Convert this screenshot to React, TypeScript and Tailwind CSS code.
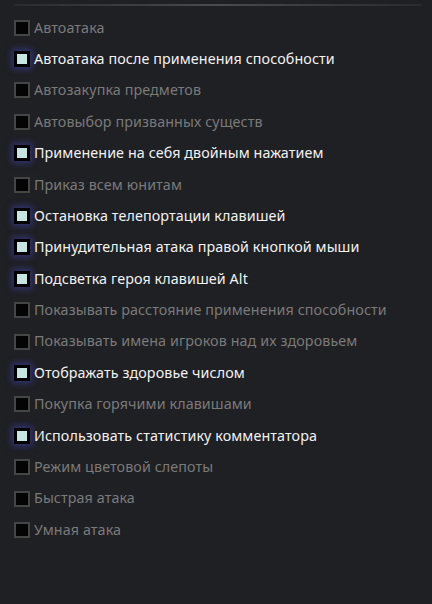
const options: { label: string; on: boolean }[] = [
  { label: "Автоатака", on: false },
  { label: "Автоатака после применения способности", on: true },
  { label: "Автозакупка предметов", on: false },
  { label: "Автовыбор призванных существ", on: false },
  { label: "Применение на себя двойным нажатием", on: true },
  { label: "Приказ всем юнитам", on: false },
  { label: "Остановка телепортации клавишей", on: true },
  { label: "Принудительная атака правой кнопкой мыши", on: true },
  { label: "Подсветка героя клавишей Alt", on: true },
  { label: "Показывать расстояние применения способности", on: false },
  { label: "Показывать имена игроков над их здоровьем", on: false },
  { label: "Отображать здоровье числом", on: true },
  { label: "Покупка горячими клавишами", on: false },
  { label: "Использовать статистику комментатора", on: true },
  { label: "Режим цветовой слепоты", on: false },
  { label: "Быстрая атака", on: false },
  { label: "Умная атака", on: false },
]

function Box({ on }: { on: boolean }) {
  if (on) {
    return (
      <span className="flex h-4 w-4 shrink-0 items-center justify-center border-[3px] border-black bg-black shadow-[0_0_6px_2px_rgba(70,70,190,0.55)]">
        <span className="h-2.5 w-2.5 bg-[#c6e4e1]" />
      </span>
    )
  }
  return <span className="h-4 w-4 shrink-0 border-2 border-[#454545] bg-[#040404]" />
}

export default function App() {
  return (
    <div className="h-[604px] w-[432px] bg-[#1f2024] px-[14px] pt-1 font-['Noto_Sans','DejaVu_Sans',sans-serif]">
      <div className="h-[2px] w-[407px] bg-gradient-to-r from-[#2a2b2e] via-[#4a4b4e] to-[#2a2b2e]" />
      <ul className="mt-[6px] flex flex-col">
        {options.map((o) => (
          <li key={o.label} className="flex h-[31.4px] items-center gap-[4px]">
            <Box on={o.on} />
            <span
              className={
                "text-[14.3px] leading-none whitespace-nowrap tracking-[0.1px] " +
                (o.on ? "text-[#f2f2f2]" : "text-[#7a7a7a]")
              }
            >
              {o.label}
            </span>
          </li>
        ))}
      </ul>
    </div>
  )
}
